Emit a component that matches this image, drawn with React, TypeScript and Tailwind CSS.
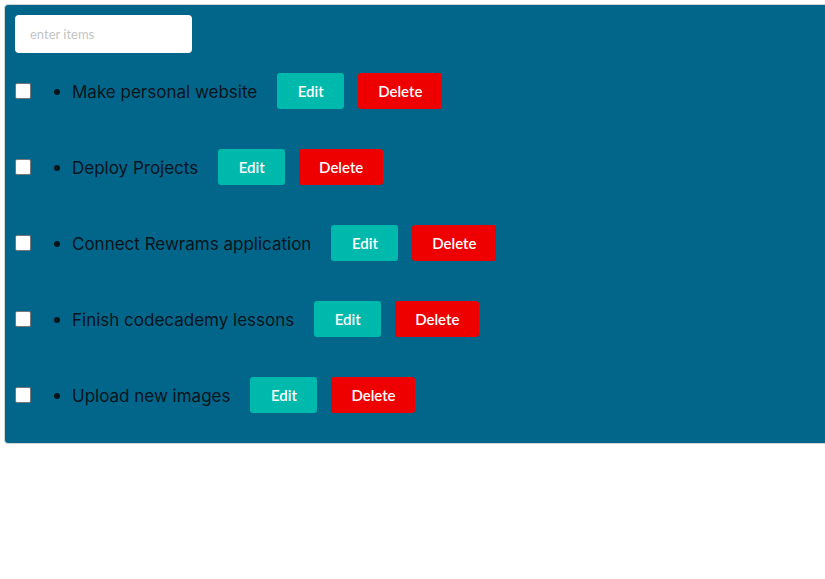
import React from "react";

const items = [
  "Make personal website",
  "Deploy Projects",
  "Connect Rewrams application",
  "Finish codecademy lessons",
  "Upload new images",
];

const TodoRow = ({ text }: { text: string }) => {
  return (
    <div className="flex items-center h-[36px]">
      <input
        type="checkbox"
        className="appearance-none w-[16px] h-[16px] bg-white border border-[#767676] rounded-[2px] m-0"
      />
      <div className="w-[6px] h-[6px] mt-[2px] rounded-full bg-[#07141c] ml-[23px]" />
      <span className="ml-[12px] mt-[3px] text-[17px] text-[#07141c] font-['Inter',sans-serif]">
        {text}
      </span>
      <button className="ml-[20px] h-[36px] w-[67px] rounded-[3px] bg-[#00b9ad] text-white text-[15px] font-semibold font-['Lato',sans-serif]">
        Edit
      </button>
      <button className="ml-[14px] h-[36px] w-[84px] rounded-[3px] bg-[#ee0000] text-white text-[15px] font-semibold font-['Lato',sans-serif]">
        Delete
      </button>
    </div>
  );
};

export default function App() {
  return (
    <div className="bg-white min-h-screen overflow-hidden pt-1 pl-1">
      <div className="w-[840px] bg-[#02668a] border border-[#d6d6d6] rounded-[4px] pt-[10px] pl-[10px] pb-[30px]">
        <input
          type="text"
          placeholder="enter items"
          className="block w-[177px] h-[38px] rounded-[4px] bg-white px-[15px] text-[13px] font-['Lato',sans-serif] placeholder:text-[#c4c4c4] outline-none"
        />
        <div className="flex flex-col gap-[40px] mt-[20px]">
          {items.map((item) => (
            <TodoRow key={item} text={item} />
          ))}
        </div>
      </div>
    </div>
  );
}
